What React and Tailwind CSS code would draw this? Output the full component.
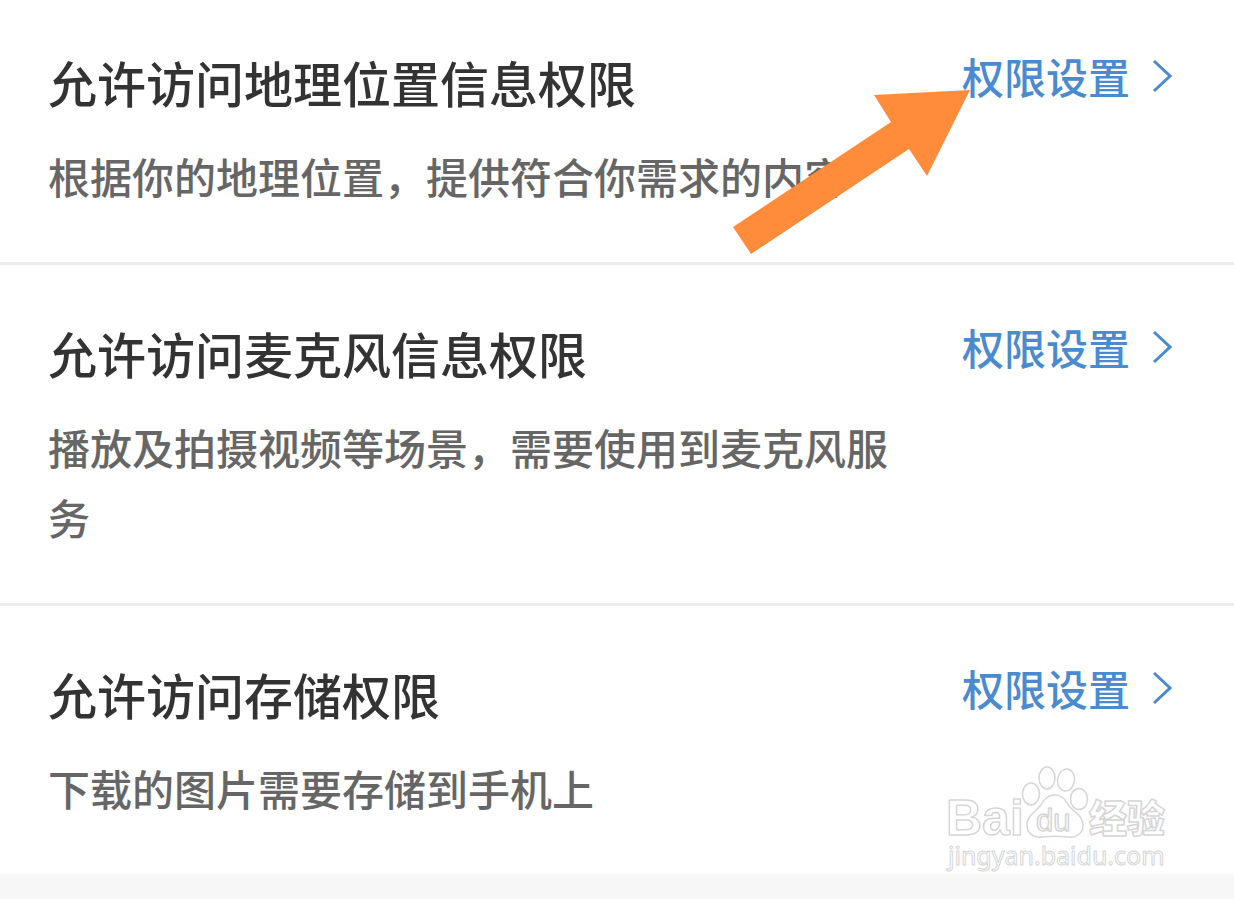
import React from 'react';

const permissions = [
  {
    id: 'location',
    title: '允许访问地理位置信息权限',
    description: '根据你的地理位置，提供符合你需求的内容',
  },
  {
    id: 'microphone',
    title: '允许访问麦克风信息权限',
    description: '播放及拍摄视频等场景，需要使用到麦克风服务',
  },
  {
    id: 'storage',
    title: '允许访问存储权限',
    description: '下载的图片需要存储到手机上',
  },
];

function Chevron() {
  return (
    <svg className="w-5 h-9" viewBox="0 0 20 36" fill="none" stroke="currentColor" strokeWidth="3" aria-hidden="true">
      <path d="M2 3L18 18L2 33" />
    </svg>
  );
}

function Arrow() {
  return (
    <svg className="absolute top-[90px] right-[262px] w-60 h-[164px]" viewBox="0 0 240 164" aria-hidden="true">
      <path d="M1 137L19 164L177 59L195 86L238 0L142 5L159 32Z" fill="#ff8c3a" />
    </svg>
  );
}

function Watermark() {
  return (
    <svg
      className="absolute bottom-0 right-[62px] w-[232px] h-[114px]"
      viewBox="0 0 232 114"
      fill="#fff"
      stroke="#d6d6d6"
      strokeWidth="1.5"
      strokeLinejoin="round"
    >
      <text x="6" y="75" className="font-['Liberation_Sans',sans-serif] font-bold text-[50px]">Bai</text>
      <ellipse cx="91" cy="34" rx="8.5" ry="11" />
      <ellipse cx="107" cy="18" rx="8" ry="11" />
      <ellipse cx="126" cy="20" rx="8.5" ry="11" transform="rotate(8 126 20)" />
      <ellipse cx="139" cy="39" rx="8.5" ry="10.5" />
      <path d="M115 35C123 35 125 40 129 46C134 52 143 56 143 65C143 74 136 78 128 77C119 76 111 76 102 77C93 78 87 73 87 65C87 56 95 52 100 46C104 40 107 35 115 35Z" />
      <text x="96" y="71" className="font-['Liberation_Sans',sans-serif] text-[31px]">du</text>
      <text x="149" y="72" className="font-['Noto_Sans_CJK_SC',sans-serif] font-black text-[38px]">经验</text>
      <text x="8" y="105" strokeWidth="1" className="font-['Noto_Sans',sans-serif] text-[25px]">jingyan.baidu.com</text>
    </svg>
  );
}

function PermissionRow({ item }) {
  return (
    <li className="flex items-start gap-12 pl-12 pr-[62px] pt-[53px] pb-[51px] first:pt-[47px] border-b-[3px] border-[#ededed] last:border-b-0">
      <div className="flex-1">
        <h2 className="text-[49px] leading-[70px] font-medium text-[#333333]">{item.title}</h2>
        <p className="mt-6 text-[42px] leading-[70px] font-medium text-[#666666]">{item.description}</p>
      </div>
      <a href={`#${item.id}`} className="flex items-center gap-[22px] text-[42px] leading-[58px] font-medium text-[#4a8bd0]">
        权限设置
        <Chevron />
      </a>
    </li>
  );
}

export default function App() {
  return (
    <div className="min-h-screen bg-[#f7f7f7] font-['Noto_Sans_CJK_SC',sans-serif]">
      <main className="relative bg-white">
        <ul>
          {permissions.map((item) => (
            <PermissionRow key={item.id} item={item} />
          ))}
        </ul>
        <Arrow />
        <Watermark />
      </main>
    </div>
  );
}
